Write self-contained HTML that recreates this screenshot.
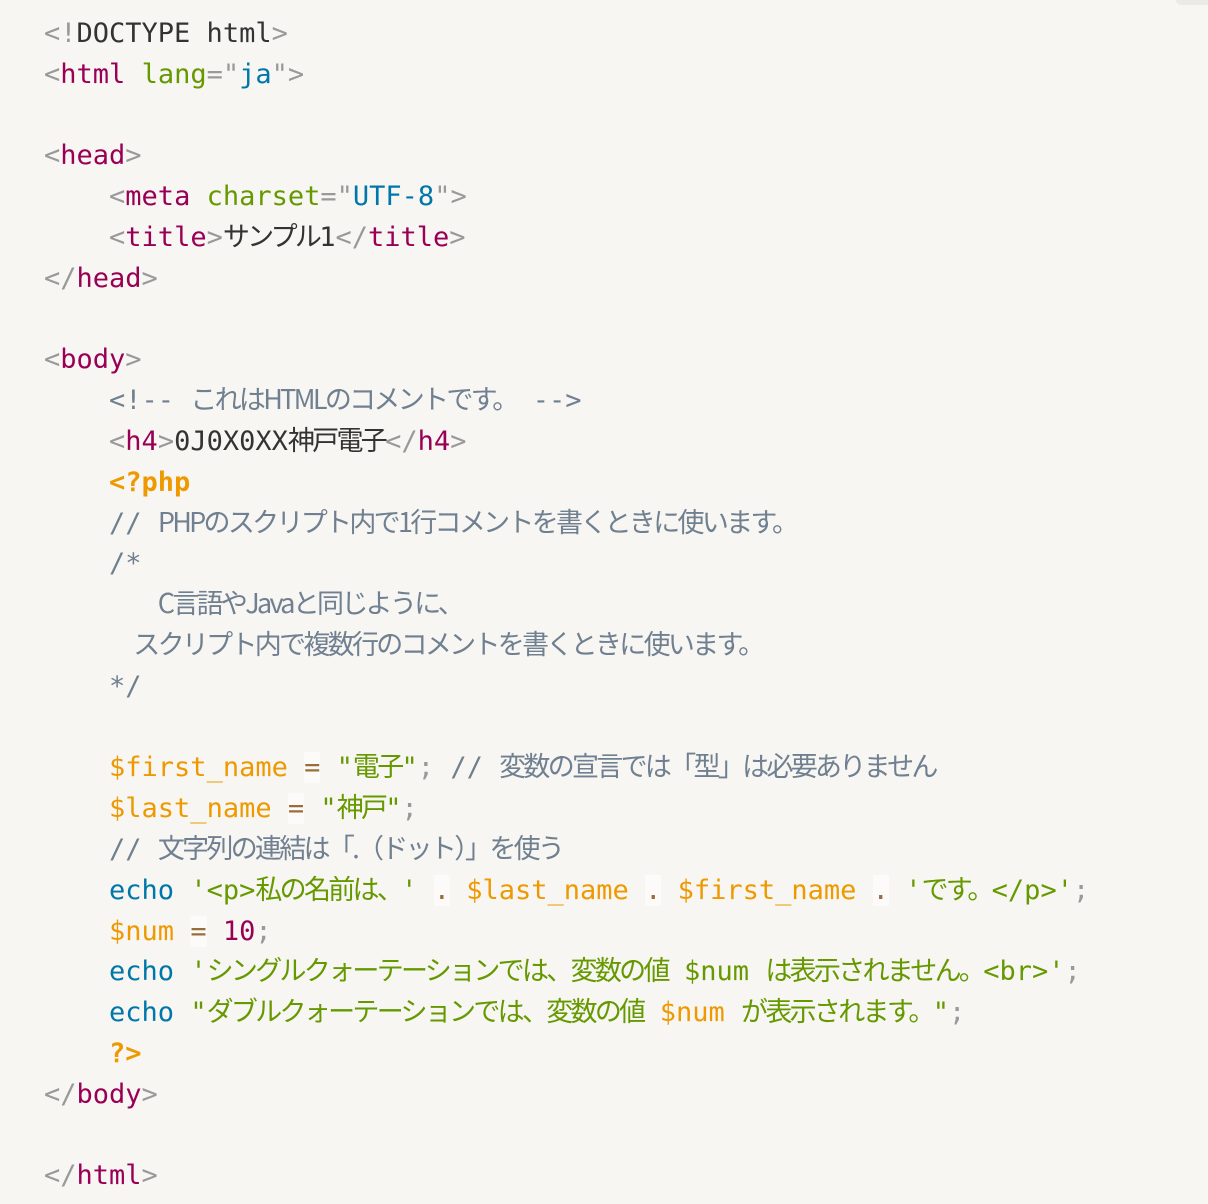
<!DOCTYPE html>
<html><head><meta charset="utf-8"><style>
html,body{margin:0;padding:0;background:#f7f6f3;width:1208px;height:1204px;overflow:hidden}
.tab{position:absolute;right:0;top:0;width:32px;height:5px;background:#ebeae6;border-bottom-left-radius:6px}
#c{position:absolute;left:44px;top:14px;font-family:"DejaVu Sans Mono","Liberation Mono","Noto Sans CJK JP",monospace;font-size:27px;color:#333;white-space:normal}
#c div{height:40.8px;line-height:40.8px;white-space:pre}
.p{color:#999}.t{color:#905}.a{color:#690}.v{color:#07a}.c{color:#708090}.s{color:#690}.k{color:#07a}
.o{color:#9a6e3a;background:rgba(255,255,255,.6)}.var{color:#e90}.d{color:#e90;font-weight:bold}.n{color:#905}
.j{font-family:"Noto Sans CJK JP",sans-serif;letter-spacing:-2.7px;line-height:0;vertical-align:baseline}
</style></head><body><div class="tab"></div><div id="c"><div><span class="p">&lt;!</span>DOCTYPE html<span class="p">&gt;</span></div><div><span class="p">&lt;</span><span class="t">html</span> <span class="a">lang</span><span class="p">="</span><span class="v">ja</span><span class="p">"&gt;</span></div><div> </div><div><span class="p">&lt;</span><span class="t">head</span><span class="p">&gt;</span></div><div>    <span class="p">&lt;</span><span class="t">meta</span> <span class="a">charset</span><span class="p">="</span><span class="v">UTF-8</span><span class="p">"&gt;</span></div><div>    <span class="p">&lt;</span><span class="t">title</span><span class="p">&gt;</span><span class="j">サンプル</span>1<span class="p">&lt;/</span><span class="t">title</span><span class="p">&gt;</span></div><div><span class="p">&lt;/</span><span class="t">head</span><span class="p">&gt;</span></div><div> </div><div><span class="p">&lt;</span><span class="t">body</span><span class="p">&gt;</span></div><div>    <span class="c">&lt;!-- <span class="j">これはHTMLのコメントです。</span> --&gt;</span></div><div>    <span class="p">&lt;</span><span class="t">h4</span><span class="p">&gt;</span>0J0X0XX<span class="j">神戸電子</span><span class="p">&lt;/</span><span class="t">h4</span><span class="p">&gt;</span></div><div>    <span class="d">&lt;?php</span></div><div>    <span class="c">// <span class="j">PHPのスクリプト内で1行コメントを書くときに使います。</span></span></div><div>    <span class="c">/*</span></div><div><span class="c">       <span class="j">C言語やJavaと同じように、</span></span></div><div><span class="c">     <span class="j" style="margin-left:8px">スクリプト内で複数行のコメントを書くときに使います。</span></span></div><div>    <span class="c">*/</span></div><div> </div><div>    <span class="var">$first_name</span> <span class="o">=</span> <span class="s">"<span class="j">電子</span>"</span><span class="p">;</span> <span class="c">// <span class="j">変数の宣言では「型」は必要ありません</span></span></div><div>    <span class="var">$last_name</span> <span class="o">=</span> <span class="s">"<span class="j">神戸</span>"</span><span class="p">;</span></div><div>    <span class="c">// <span class="j">文字列の連結は「.（ドット）」を使う</span></span></div><div>    <span class="k">echo</span> <span class="s">'&lt;p&gt;<span class="j">私の名前は、</span>'</span> <span class="o">.</span> <span class="var">$last_name</span> <span class="o">.</span> <span class="var">$first_name</span> <span class="o">.</span> <span class="s">'<span class="j">です。</span>&lt;/p&gt;'</span><span class="p">;</span></div><div>    <span class="var">$num</span> <span class="o">=</span> <span class="n">10</span><span class="p">;</span></div><div>    <span class="k">echo</span> <span class="s">'<span class="j">シングルクォーテーションでは、変数の値</span> $num <span class="j">は表示されません。</span>&lt;br&gt;'</span><span class="p">;</span></div><div>    <span class="k">echo</span> <span class="s">"<span class="j">ダブルクォーテーションでは、変数の値</span> <span class="var">$num</span> <span class="j">が表示されます。</span>"</span><span class="p">;</span></div><div>    <span class="d">?&gt;</span></div><div><span class="p">&lt;/</span><span class="t">body</span><span class="p">&gt;</span></div><div> </div><div><span class="p">&lt;/</span><span class="t">html</span><span class="p">&gt;</span></div></div></body></html>
